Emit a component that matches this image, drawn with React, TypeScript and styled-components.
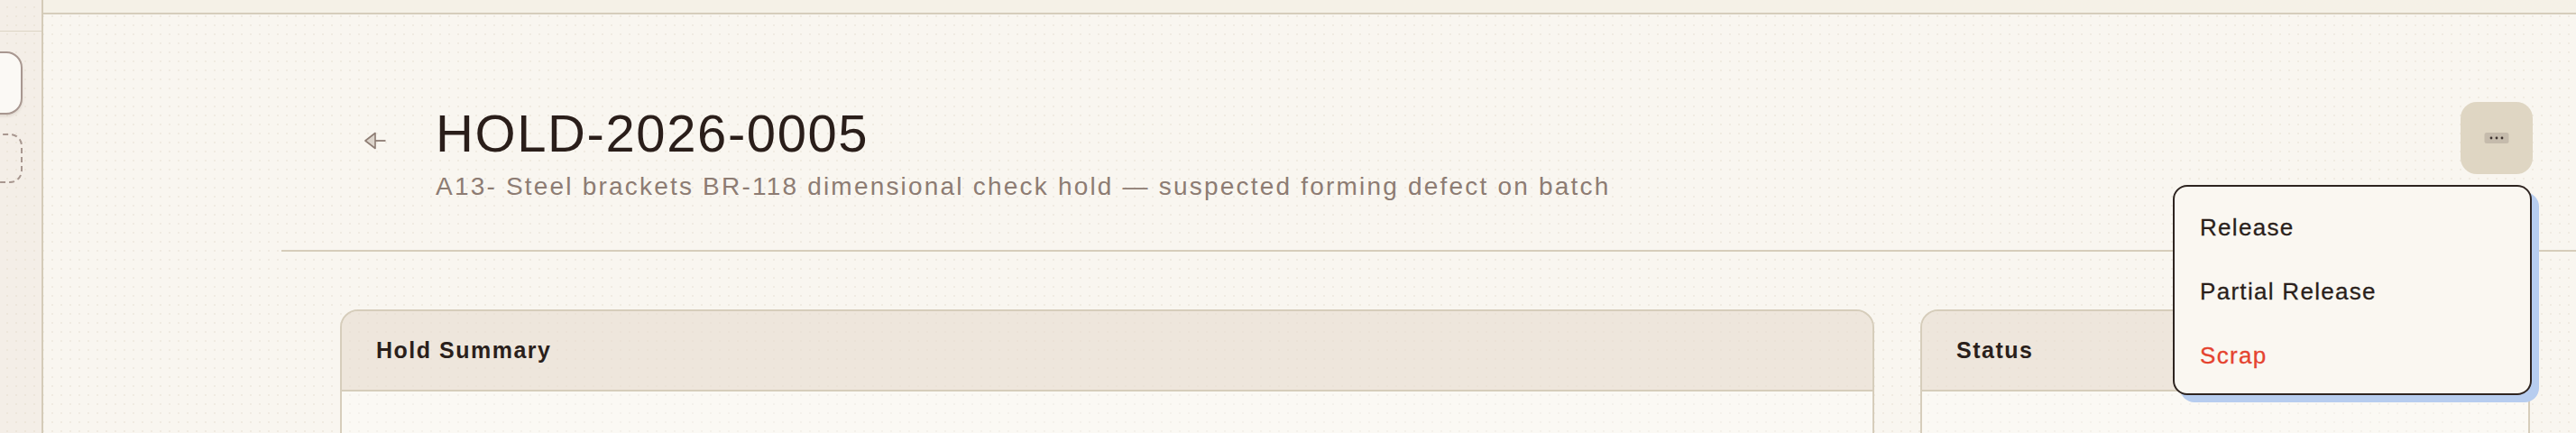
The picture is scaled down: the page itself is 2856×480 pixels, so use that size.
import React, {FC} from 'react';
import styled, {createGlobalStyle} from 'styled-components';

const GlobalStyle = createGlobalStyle`
  html, body {
    margin: 0;
    padding: 0;
    height: 100%;
    overflow: hidden;
  }
  body {
    font-family: 'Liberation Sans', Arial, sans-serif;
    color: #2b201c;
    background-color: #f9f6f0;
    background-image: radial-gradient(circle, #f0ebe2 1px, transparent 1.3px);
    background-size: 10px 10px;
    background-position: 3px 3px;
  }
  * {
    box-sizing: border-box;
  }
`;

const Shell = styled.div`
  display: flex;
  height: 480px;
  overflow: hidden;
`;

const Sidebar = styled.aside`
  display: flex;
  flex-direction: column;
  flex-shrink: 0;
  width: 48px;
  border-right: 2px solid #d4cbb8;
  background-color: rgba(225, 212, 195, 0.2);
  overflow: hidden;
`;

const SidebarHead = styled.div`
  height: 35px;
  border-bottom: 1px solid #ddd5c5;
`;

const SidebarTile = styled.div<{dashed?: boolean}>`
  flex-shrink: 0;
  width: 66px;
  margin-left: -41px;
  margin-top: ${(props) => (props.dashed ? '21px' : '22px')};
  height: ${(props) => (props.dashed ? '55px' : '70px')};
  border: 2px ${(props) => (props.dashed ? 'dashed' : 'solid')} #a89790;
  border-radius: ${(props) => (props.dashed ? '14px' : '18px')};
  background-color: ${(props) => (props.dashed ? 'transparent' : '#fbf9f5')};
  box-shadow: ${(props) =>
    props.dashed ? 'none' : '0 2px 3px rgba(80, 60, 40, 0.12)'};
`;

const Main = styled.main`
  display: flex;
  flex-direction: column;
  flex: 1;
  min-width: 0;
`;

const TopBar = styled.div`
  flex-shrink: 0;
  height: 16px;
  border-bottom: 2px solid #d5cdbb;
  background-color: #f5f1e7;
`;

const Content = styled.div`
  padding-left: 264px;
`;

const Header = styled.header`
  padding: 97px 48px 52px 65px;
  border-bottom: 2px solid #d6cdbb;
`;

const HeaderRow = styled.div`
  display: flex;
  align-items: flex-start;
`;

const BackButton = styled.button`
  display: flex;
  align-items: center;
  justify-content: center;
  flex-shrink: 0;
  width: 44px;
  height: 44px;
  margin: 21px 45px 0 17px;
  padding: 0;
  border: none;
  background: transparent;
  cursor: pointer;
`;

const TitleBlock = styled.div`
  flex: 1;
  min-width: 0;
`;

const Title = styled.h1`
  margin: 0;
  font-size: 58px;
  line-height: 70px;
  font-weight: 400;
  color: #2a1e1a;
  letter-spacing: 1.6px;
`;

const Subtitle = styled.p`
  margin: 6px 0 0;
  font-size: 28px;
  line-height: 36px;
  color: #8d7c73;
  letter-spacing: 2.2px;
  white-space: nowrap;
`;

const Actions = styled.div`
  position: relative;
  flex-shrink: 0;
`;

const MoreButton = styled.button`
  display: flex;
  align-items: center;
  justify-content: center;
  width: 80px;
  height: 80px;
  padding: 0;
  border: none;
  border-radius: 18px;
  background-color: #dfd6c3;
  cursor: pointer;
`;

const Menu = styled.div`
  position: absolute;
  top: calc(100% + 12px);
  right: 1px;
  z-index: 10;
  width: 398px;
  padding: 10px 0 6px;
  border: 2px solid #2e2420;
  border-radius: 16px;
  background-color: #faf7f1;
  box-shadow: 8px 8px 0 #b7cdef;
`;

const MenuItem = styled.div<{danger?: boolean}>`
  display: flex;
  align-items: center;
  height: 71px;
  padding-left: 28px;
  font-size: 26px;
  line-height: 71px;
  letter-spacing: 1.3px;
  color: ${(props) => (props.danger ? '#e5432f' : '#2a1f1b')};
  -webkit-text-stroke: 0.3px currentColor;
  cursor: pointer;
`;

const Cards = styled.div`
  display: grid;
  grid-template-columns: 1701px 676px;
  gap: 51px;
  margin: 64px 0 0 65px;
`;

const Card = styled.section`
  height: 400px;
  border: 2px solid #d6cdbb;
  border-radius: 20px;
  background-color: rgba(255, 255, 255, 0.3);
  overflow: hidden;
`;

const CardHeader = styled.div`
  display: flex;
  align-items: center;
  height: 89px;
  padding: 0 38px;
  border-bottom: 2px solid #d6cdbb;
  background-color: rgba(225, 212, 195, 0.5);
  font-size: 25px;
  font-weight: 700;
  letter-spacing: 1.5px;
  color: #2a1f1b;
`;

const BackArrow: FC = () => (
  <svg width="24" height="20" viewBox="0 0 24 20" fill="none">
    <polygon
      points="1,10 12,1.5 12,18.5"
      fill="#dcd4cb"
      stroke="#8d7c73"
      strokeWidth="1.6"
      strokeLinejoin="round"
    />
    <line x1="12" y1="10" x2="23.5" y2="10" stroke="#8d7c73" strokeWidth="1.8" />
  </svg>
);

const DotsPill: FC = () => (
  <svg width="28" height="14" viewBox="0 0 28 14">
    <rect x="0.5" y="1" width="27" height="12" rx="2.5" fill="#c5bbac" />
    <circle cx="8" cy="7" r="1.4" fill="#3f3430" />
    <circle cx="14" cy="7" r="1.4" fill="#3f3430" />
    <circle cx="20" cy="7" r="1.4" fill="#3f3430" />
  </svg>
);

const menuItems = [
  {label: 'Release'},
  {label: 'Partial Release'},
  {label: 'Scrap', danger: true},
];

const App: FC = () => {
  return (
    <>
      <GlobalStyle />
      <Shell>
        <Sidebar>
          <SidebarHead />
          <SidebarTile />
          <SidebarTile dashed />
        </Sidebar>
        <Main>
          <TopBar />
          <Content>
            <Header>
              <HeaderRow>
                <BackButton aria-label="Back">
                  <BackArrow />
                </BackButton>
                <TitleBlock>
                  <Title>HOLD-2026-0005</Title>
                  <Subtitle>
                    A13- Steel brackets BR-118 dimensional check hold — suspected
                    forming defect on batch
                  </Subtitle>
                </TitleBlock>
                <Actions>
                  <MoreButton aria-label="More actions">
                    <DotsPill />
                  </MoreButton>
                  <Menu>
                    {menuItems.map((item) => (
                      <MenuItem key={item.label} danger={item.danger}>
                        {item.label}
                      </MenuItem>
                    ))}
                  </Menu>
                </Actions>
              </HeaderRow>
            </Header>
            <Cards>
              <Card>
                <CardHeader>Hold Summary</CardHeader>
              </Card>
              <Card>
                <CardHeader>Status</CardHeader>
              </Card>
            </Cards>
          </Content>
        </Main>
      </Shell>
    </>
  );
};

export default App;
